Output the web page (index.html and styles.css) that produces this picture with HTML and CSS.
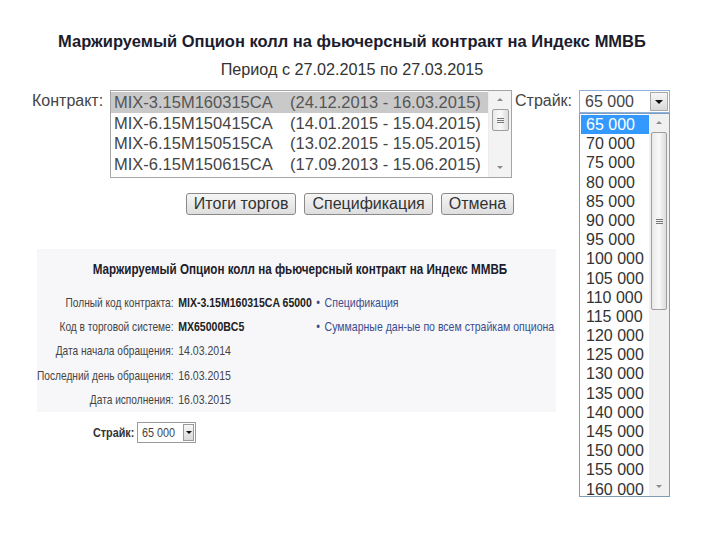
FILE: index.html
```html
<!DOCTYPE html>
<html lang="ru">
<head>
    <meta charset="UTF-8">
    <title>Опцион</title>
    <link rel="stylesheet" href="styles.css">
</head>
<body>
    <div class="page">
        <h1 class="title">Маржируемый Опцион колл на фьючерсный контракт на Индекс ММВБ</h1>
        <div class="period">Период с 27.02.2015 по 27.03.2015</div>

        <div class="form-row">
            <span class="label">Контракт:</span>
            <div class="listbox">
                <div class="list-items">
                    <div class="list-item selected"><span class="code">MIX-3.15M160315CA</span><span>(24.12.2013 - 16.03.2015)</span></div>
                    <div class="list-item"><span class="code">MIX-6.15M150415CA</span><span>(14.01.2015 - 15.04.2015)</span></div>
                    <div class="list-item"><span class="code">MIX-6.15M150515CA</span><span>(13.02.2015 - 15.05.2015)</span></div>
                    <div class="list-item"><span class="code">MIX-6.15M150615CA</span><span>(17.09.2013 - 15.06.2015)</span></div>
                </div>
                <div class="scrollbar">
                    <div class="arrow up"></div>
                    <div class="thumb small"><span class="grip"></span></div>
                    <div class="track"></div>
                    <div class="arrow down"></div>
                </div>
            </div>
            <span class="label strike-label">Страйк:</span>
            <div class="select-wrap">
                <div class="select">
                    <span class="select-value">65 000</span>
                    <span class="select-btn"><span class="tri"></span></span>
                </div>
                <div class="dropdown">
                    <div class="options" id="options"></div>
                    <div class="scrollbar tall">
                        <div class="arrow up"></div>
                        <div class="thumb big"><span class="grip"></span></div>
                        <div class="track"></div>
                        <div class="arrow down"></div>
                    </div>
                </div>
            </div>
        </div>

        <div class="buttons">
            <button>Итоги торгов</button>
            <button>Спецификация</button>
            <button>Отмена</button>
        </div>

        <div class="panel">
            <h2 class="panel-title">Маржируемый Опцион колл на фьючерсный контракт на Индекс ММВБ</h2>
            <div class="info">
                <span class="k">Полный код контракта:</span>
                <span class="v b">MIX-3.15M160315CA 65000</span>
                <a href="#" class="link">Спецификация</a>

                <span class="k">Код в торговой системе:</span>
                <span class="v b">MX65000BC5</span>
                <a href="#" class="link">Суммарные дан-ые по всем страйкам опциона</a>

                <span class="k">Дата начала обращения:</span>
                <span class="v">14.03.2014</span>
                <span></span>

                <span class="k">Последний день обращения:</span>
                <span class="v">16.03.2015</span>
                <span></span>

                <span class="k">Дата исполнения:</span>
                <span class="v">16.03.2015</span>
                <span></span>
            </div>
        </div>

        <div class="bottom">
            <span class="bottom-label"><span class="narrow">Страйк:</span></span>
            <div class="mini-select">
                <span class="mini-value"><span class="narrow">65 000</span></span>
                <span class="mini-btn"><span class="tri"></span></span>
            </div>
        </div>
    </div>

    <script>
        const options = document.getElementById('options');
        for (let v = 65; v <= 160; v += 5) {
            const opt = document.createElement('div');
            opt.className = 'option' + (v === 65 ? ' active' : '');
            opt.textContent = v + ' 000';
            options.appendChild(opt);
        }
    </script>
</body>
</html>
```

FILE: styles.css
```css
* {
    margin: 0;
    padding: 0;
    box-sizing: border-box;
}

body {
    font-family: "Liberation Sans", Arial, sans-serif;
    background: #fff;
    color: #2a2a2a;
}

.page {
    width: 720px;
    height: 540px;
    padding-top: 31px;
}

.title {
    font-size: 16.5px;
    font-weight: bold;
    text-align: center;
    color: #1c1c2c;
    line-height: 20px;
    margin-right: 16px;
}

.period {
    font-size: 16.2px;
    text-align: center;
    line-height: 20px;
    margin-top: 8px;
    margin-right: 16px;
    color: #333;
}

.form-row {
    display: flex;
    align-items: flex-start;
    margin-top: 11px;
    padding-left: 32px;
}

.label {
    font-size: 16px;
    color: #444;
    line-height: 20px;
    padding-top: 1px;
    width: 78px;
}

.strike-label {
    width: 64px;
    margin-left: 3px;
}

/* contract list */
.listbox {
    width: 402px;
    height: 88px;
    border: 1px solid #a5a5a5;
    display: flex;
    background: #fff;
}

.list-items {
    flex: 1;
    padding-top: 1px;
}

.list-item {
    font-size: 16.5px;
    color: #444;
    height: 20.7px;
    line-height: 20px;
    padding-left: 3px;
    display: flex;
}

.list-item .code {
    width: 176px;
}

.list-item.selected {
    background: #c9c9c9;
    color: #555;
}

.scrollbar {
    width: 23px;
    background: #f3f3f3;
    display: flex;
    flex-direction: column;
    align-items: center;
    border-left: 1px solid #ececec;
}

.arrow {
    height: 18px;
    width: 100%;
    position: relative;
}

.arrow::after {
    content: "";
    position: absolute;
    left: 50%;
    top: 50%;
    margin-left: -3px;
    margin-top: -2px;
    border-left: 3px solid transparent;
    border-right: 3px solid transparent;
}

.arrow.up::after {
    border-bottom: 3px solid #8a8a8a;
}

.arrow.down::after {
    border-top: 3px solid #8a8a8a;
}

.thumb {
    width: 17px;
    border: 1px solid #9e9e9e;
    border-radius: 2px;
    background: linear-gradient(to right, #e9e9e9, #f8f8f8 50%, #dcdcdc);
    display: flex;
    align-items: center;
    justify-content: center;
}

.thumb.small {
    height: 22px;
}

.thumb.big {
    height: 178px;
    width: 16px;
}

.grip {
    width: 7px;
    height: 5px;
    border-top: 1px solid #777;
    border-bottom: 1px solid #777;
    position: relative;
}

.grip::after {
    content: "";
    position: absolute;
    left: 0;
    right: 0;
    top: 1px;
    border-top: 1px solid #777;
}

.track {
    flex: 1;
}

/* strike select */
.select-wrap {
    position: relative;
}

.select {
    width: 91px;
    height: 23px;
    border: 1px solid #8fb2dc;
    display: flex;
    align-items: center;
    background: #fff;
}

.select-value {
    flex: 1;
    font-size: 16px;
    color: #444;
    padding-left: 5px;
}

.select-btn {
    width: 18px;
    height: 19px;
    margin-right: 1px;
    border: 1px solid #a9a9a9;
    background: linear-gradient(#f6f6f6, #d9d9d9);
    position: relative;
}

.tri {
    position: absolute;
    left: 50%;
    top: 50%;
    margin-left: -4px;
    margin-top: -2px;
    border-left: 4px solid transparent;
    border-right: 4px solid transparent;
    border-top: 4px solid #111;
}

.dropdown {
    position: absolute;
    top: 23px;
    left: 0;
    width: 91px;
    height: 384px;
    border: 1px solid #7f9db9;
    background: #fff;
    display: flex;
}

.options {
    flex: 1;
    padding: 1px 0 0 1px;
}

.option {
    font-size: 16px;
    color: #333;
    line-height: 19.2px;
    height: 19.2px;
    padding-left: 5px;
}

.option.active {
    background: #3399ff;
    color: #fff;
}

.scrollbar.tall {
    width: 20px;
    border-left: none;
    background: #f0f0f0;
}

/* buttons */
.buttons {
    display: flex;
    justify-content: center;
    gap: 8px;
    margin-top: 15px;
    margin-right: 20px;
}

.buttons button {
    font-family: "Liberation Sans", Arial, sans-serif;
    font-size: 16px;
    color: #333;
    height: 22px;
    padding: 0 7px;
    border: 1px solid #8a8a8a;
    border-radius: 3px;
    background: linear-gradient(#f6f6f6, #dedede);
}

/* info panel */
.panel {
    margin: 34px 0 0 37px;
    width: 519px;
    height: 163px;
    background: #f7f7f9;
    padding-top: 12px;
    overflow: hidden;
}

/* no narrow font installed, so the panel text is squeezed */
.panel-title {
    width: 633px;
    transform: scaleX(0.82);
    transform-origin: 0 0;
    font-size: 14.2px;
    font-weight: bold;
    color: #1c1c2c;
    line-height: 16px;
    padding-left: 68px;
    white-space: nowrap;
}

.info {
    width: 665px;
    transform: scaleX(0.78);
    transform-origin: 0 0;
    display: grid;
    grid-template-columns: 178px 180px auto;
    margin-top: 14px;
    font-size: 13.5px;
    line-height: 24.2px;
    color: #444;
    white-space: nowrap;
}

.info .k {
    text-align: right;
    padding-right: 3px;
    font-size: 13px;
}

.info .v {
    padding-left: 3px;
}

.info .b {
    font-weight: bold;
    color: #222;
}

.info .link {
    color: #3a4d8f;
    text-decoration: none;
}

.info .link::before {
    content: "\2022";
    margin-right: 6px;
    color: #3a4d8f;
}

/* bottom strike */
.bottom {
    display: flex;
    align-items: center;
    margin: 10px 0 0 93px;
}

.narrow {
    display: inline-block;
    transform: scaleX(0.8);
    transform-origin: 0 50%;
}

.bottom-label {
    font-size: 13.5px;
    font-weight: bold;
    color: #333;
    width: 44px;
    white-space: nowrap;
}

.mini-select {
    width: 59px;
    height: 21px;
    border: 1px solid #9a9a9a;
    display: flex;
    align-items: center;
    background: #fff;
}

.mini-value {
    flex: 1;
    font-size: 13.5px;
    padding-left: 4px;
    color: #444;
    white-space: nowrap;
}

.mini-btn {
    width: 14px;
    height: 17px;
    margin-right: 1px;
    border: 1px solid #9a9a9a;
    background: linear-gradient(#f6f6f6, #d9d9d9);
    position: relative;
}

.mini-btn .tri {
    margin-left: -3px;
    border-left-width: 3px;
    border-right-width: 3px;
    border-top-width: 3px;
}
```
